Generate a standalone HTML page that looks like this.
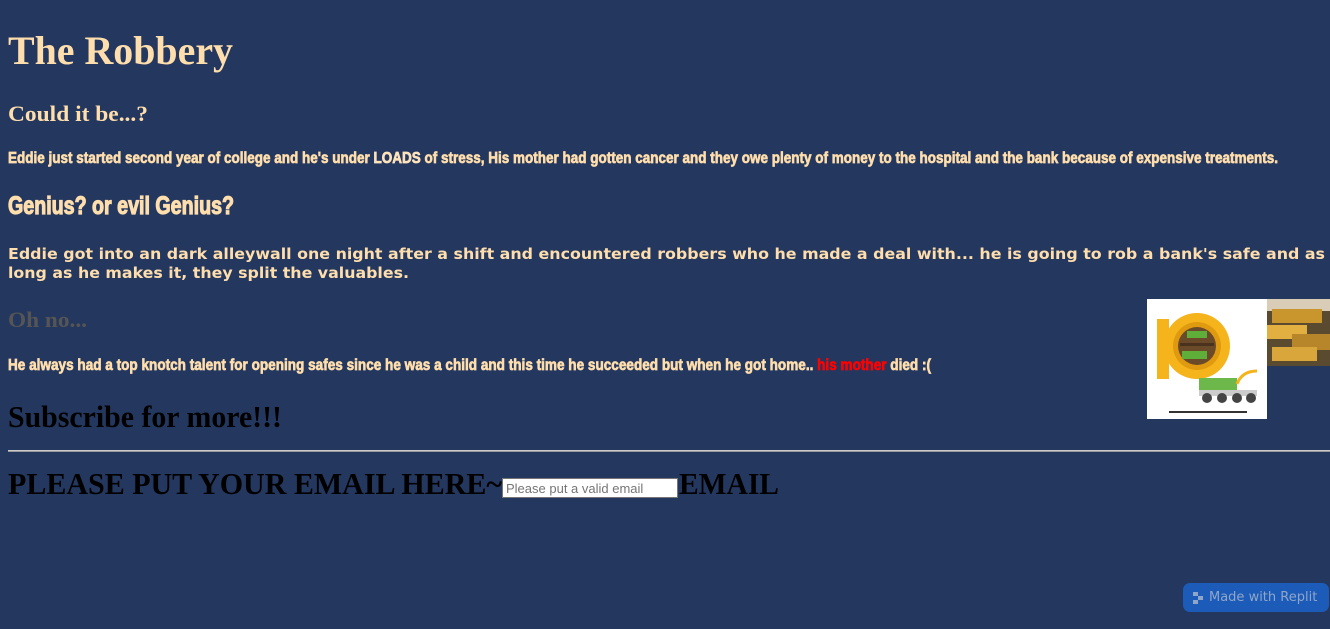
<!DOCTYPE html>
<html><head><meta charset="utf-8">
<style>
html,body{margin:0;padding:0;}
body{width:1330px;height:629px;background:#24375e;position:relative;overflow:hidden;font-family:"Liberation Serif",serif;}
.t{position:absolute;left:8px;white-space:nowrap;transform-origin:0 50%;line-height:1;}
.imp{font-family:"Liberation Sans Narrow","Liberation Sans",sans-serif;font-weight:bold;color:#ffdead;-webkit-text-stroke:0.7px #ffdead;}
.ver{font-family:"DejaVu Sans",sans-serif;font-weight:bold;color:#ffdead;font-size:15px;}
input{position:absolute;left:502px;top:478px;width:176px;height:20px;box-sizing:border-box;border:1px solid #767676;font:13px "Liberation Sans",sans-serif;padding:1px 3px;background:#fff;}
input::placeholder{color:#757575;}
.badge{position:absolute;left:1183px;top:583px;width:146px;height:29px;background:#1c5bb8;border-radius:7px;color:#8fa6c9;font:13px "DejaVu Sans",sans-serif;}
</style></head><body>
<div class="t" style="top:31px;font-size:40px;font-weight:bold;color:#ffdead;--w:225">The Robbery</div>
<div class="t" style="top:103px;font-size:22px;font-weight:bold;color:#ffdead;--w:140">Could it be...?</div>
<div class="t imp" style="top:151px;font-size:16px;--w:1270">Eddie just started second year of college and he's under <span style="color:#ffe0b0;-webkit-text-stroke:0.7px #ffe8c8">LOADS</span> of stress, His mother had gotten cancer and they owe plenty of money to the hospital and the bank because of expensive treatments.</div>
<div class="t imp" style="top:194px;font-size:25px;-webkit-text-stroke:1.2px #ffdead;--w:226">Genius? or evil Genius?</div>
<div class="t ver" style="top:247px;--w:1317">Eddie got into an dark alleywall one night after a shift and encountered robbers who he made a deal with... he is going to rob a bank's safe and as</div>
<div class="t ver" style="top:266px;--w:401">long as he makes it, they split the valuables.</div>
<div class="t" style="top:309px;font-size:22px;font-weight:bold;color:#555;--w:79">Oh no...</div>
<div class="t imp" style="top:358px;font-size:16px;--w:923">He always had a top knotch talent for opening safes since he was a child and this time he succeeded but when he got home.. <span style="color:#f00;-webkit-text-stroke:0.7px #f00">his mother</span> died :(</div>
<div class="t" style="top:401px;font-size:31px;font-weight:bold;color:#000;--w:274">Subscribe for more!!!</div>
<div style="position:absolute;left:8px;right:0;top:450px;height:0;border-top:1px solid #ccc;border-bottom:1px solid #999;"></div>
<div class="t" style="top:468px;font-size:31px;font-weight:bold;color:#000;--w:494">PLEASE PUT YOUR EMAIL HERE~</div>
<input placeholder="Please put a valid email">
<div class="t" style="left:679px;top:468px;font-size:31px;font-weight:bold;color:#000;--w:100">EMAIL</div>

<svg style="position:absolute;left:1147px;top:299px" width="120" height="120" viewBox="0 0 120 120">
<rect width="120" height="120" fill="#fff"/>
<rect x="10" y="20" width="12" height="60" fill="#f5b41c"/>
<circle cx="50" cy="47" r="33" fill="#f5b41c"/>
<circle cx="50" cy="47" r="24" fill="#e09a10"/>
<circle cx="50" cy="47" r="19" fill="#6b4a2a"/>
<rect x="33" y="44" width="34" height="3" fill="#4a321c"/>
<rect x="40" y="32" width="20" height="7" fill="#5fae3a"/>
<rect x="35" y="52" width="25" height="8" fill="#5fae3a"/>
<rect x="52" y="79" width="38" height="12" fill="#6cb84a"/>
<path d="M90 85 Q95 72 110 72" stroke="#f5b41c" stroke-width="3" fill="none"/>
<rect x="52" y="91" width="58" height="6" fill="#ccc"/>
<circle cx="60" cy="99" r="5" fill="#444"/><circle cx="75" cy="99" r="5" fill="#444"/><circle cx="90" cy="99" r="5" fill="#444"/><circle cx="104" cy="99" r="5" fill="#444"/>
<rect x="22" y="112" width="78" height="2" fill="#333"/>
</svg>
<svg style="position:absolute;left:1267px;top:299px" width="63" height="67" viewBox="0 0 63 67">
<rect width="63" height="67" fill="#5a4a30"/>
<rect x="0" y="0" width="63" height="12" fill="#d9cdb8"/>
<rect x="5" y="10" width="50" height="14" fill="#c9962e"/>
<rect x="0" y="26" width="40" height="14" fill="#e2b040"/>
<rect x="25" y="35" width="38" height="16" fill="#b8862a"/>
<rect x="5" y="48" width="45" height="14" fill="#d8a63a"/>
</svg>

<div class="badge"><svg style="position:absolute;left:10px;top:9px" width="12" height="12"><rect x="0" y="0" width="5" height="4" fill="#8fa6c9"/><rect x="5" y="4" width="5" height="4" fill="#8fa6c9"/><rect x="0" y="8" width="5" height="4" fill="#8fa6c9"/></svg><span style="position:absolute;left:26px;top:7px">Made with Replit</span></div>
<script>
document.querySelectorAll('.t').forEach(function(e){
 var w=parseFloat(getComputedStyle(e).getPropertyValue('--w'));
 if(w){var a=e.getBoundingClientRect().width; if(a>0) e.style.transform='scaleX('+(w/a)+')';}
});
</script>
</body></html>
